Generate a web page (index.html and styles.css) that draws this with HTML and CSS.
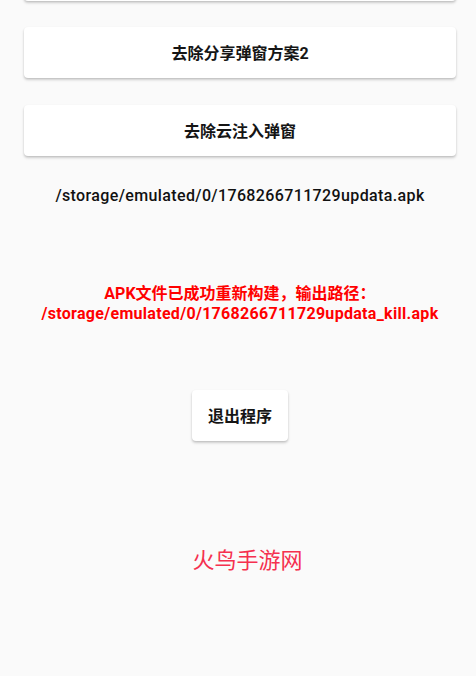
FILE: index.html
```html
<!DOCTYPE html>
<html lang="zh-CN">
<head>
<meta charset="utf-8">
<title>APK</title>
<link rel="stylesheet" href="styles.css">
</head>
<body>
<main class="page">
  <div class="card card-wide card-cut"></div>
  <button class="card card-wide">去除分享弹窗方案2</button>
  <button class="card card-wide">去除云注入弹窗</button>
  <p class="path">/storage/emulated/0/1768266711729updata.apk</p>
  <p class="result">APK文件已成功重新构建，输出路径：<br><span class="result-path">/storage/emulated/0/1768266711729updata_kill.apk</span></p>
  <button class="card card-small">退出程序</button>
  <p class="mark">火鸟手游网</p>
</main>
</body>
</html>
```
FILE: styles.css
```css
html, body {
  margin: 0;
  padding: 0;
  background: #fafafa;
}
body {
  width: 476px;
  height: 676px;
  overflow: hidden;
  font-family: "Roboto", "Noto Sans CJK SC", sans-serif;
}
.page {
  width: 480px;
  display: flex;
  flex-direction: column;
  align-items: center;
}
.card {
  box-sizing: border-box;
  display: flex;
  align-items: center;
  justify-content: center;
  height: 51px;
  background: #ffffff;
  border: none;
  border-radius: 4px;
  box-shadow: 0 2px 3px rgba(0,0,0,0.16), 0 1px 2px rgba(0,0,0,0.10);
  font-family: "Roboto", "Noto Sans CJK SC", sans-serif;
  font-size: 16px;
  font-weight: 700;
  color: #151515;
  padding: 0 0 2px;
}
.card-wide {
  width: 432px;
  margin-bottom: 27px;
}
.card-cut {
  margin-top: -50px;
  margin-bottom: 26px;
}
.path {
  margin: 3px 0 0;
  line-height: 20px;
  font-size: 16px;
  font-weight: 500;
  letter-spacing: 0.37px;
  color: #111;
  text-align: center;
}
.result {
  margin: 78px 0 0;
  line-height: 20px;
  font-size: 16px;
  font-weight: 700;
  color: #ff0000;
  text-align: center;
}
.result-path {
  letter-spacing: 0.3px;
}
.card-small {
  width: 96px;
  margin-top: 66px;
}
.mark {
  margin: 102px 0 0 15px;
  font-size: 22px;
  line-height: 30px;
  font-weight: 400;
  color: #f5304f;
  font-family: "Noto Sans CJK SC", sans-serif;
}
```
